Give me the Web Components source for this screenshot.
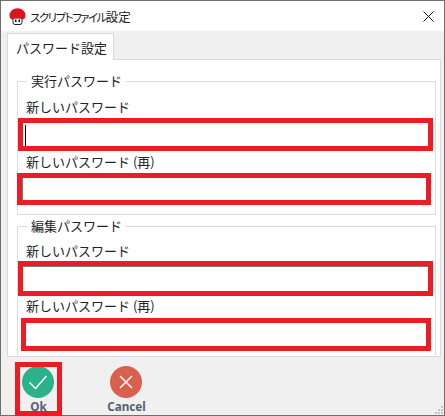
<!DOCTYPE html>
<html lang="ja">
<head>
<meta charset="utf-8">
<title>スクリプトファイル設定</title>
<style>
html, body { margin: 0; padding: 0; background: #f0f0f0; }
body { font-family: "Noto Sans CJK JP", "Noto Sans", sans-serif; font-size: 13px; color: #222; }
</style>
</head>
<body>
<dialog-window>
  <title-bar>スクリプトファイル<span slot="end">設定</span></title-bar>
  <tab-panel label="パスワード設定">
    <group-box label="実行パスワード" pad-top="3" pad-bottom="11">
      <pass-field label="新しいパスワード" mark="-5,-5,415,33" caret></pass-field>
      <pass-field label="新しいパスワード (再)" mark="-6,-5,414,32"></pass-field>
    </group-box>
    <group-box label="編集パスワード" pad-top="2" pad-bottom="8" open-bottom>
      <pass-field label="新しいパスワード" mark="-5,-6,415,35"></pass-field>
      <pass-field label="新しいパスワード (再)" mark="-2,-4,410,33"></pass-field>
    </group-box>
  </tab-panel>
  <button-bar>
    <round-button kind="ok" text="Ok" marked></round-button>
    <round-button kind="cancel" text="Cancel"></round-button>
  </button-bar>
</dialog-window>

<script>
class DialogWindow extends HTMLElement {
    constructor() {
        super();
        this.attachShadow({ mode: 'open' }).innerHTML = `
        <style>
        :host {
            display: flex;
            flex-direction: column;
            position: relative;
            box-sizing: border-box;
            width: 445px;
            height: 416px;
            border: 1px solid #6e6e6e;
            background: #f0f0f0;
        }
        svg { position: absolute; right: 1px; bottom: 1px; }
        </style>
        <slot></slot>
        <svg width="8" height="8" viewBox="0 0 8 8" fill="#c4c4c4">
          <rect x="6" y="0" width="2" height="2"/>
          <rect x="3" y="3" width="2" height="2"/>
          <rect x="6" y="3" width="2" height="2"/>
          <rect x="0" y="6" width="2" height="2"/>
          <rect x="3" y="6" width="2" height="2"/>
          <rect x="6" y="6" width="2" height="2"/>
        </svg>`;
    }
}

class TitleBar extends HTMLElement {
    constructor() {
        super();
        this.attachShadow({ mode: 'open' }).innerHTML = `
        <style>
        :host {
            display: flex;
            align-items: center;
            flex: none;
            height: 30px;
            background: #fff;
            padding-left: 8px;
            font-size: 12.500px;
            color: #1a1a1a;
        }
        .caption { margin-left: 4px; white-space: nowrap; }
        .kana { font-size: 11.500px; font-feature-settings: "palt"; letter-spacing: -1.500px; }
        .close { margin-left: auto; margin-right: 10px; }
        </style>
        <svg width="17" height="17" viewBox="0 0 17 17">
          <path d="M4 10h9v4.500a2 2 0 0 1-2 2H6a2 2 0 0 1-2-2z" fill="#fff" stroke="#222"/>
          <path d="M.5 7.500a8 7.300 0 0 1 16 0c0 2.500-1.500 4-3.500 4 0-1-1-1.500-4.500-1.500S4 10.500 4 11.500c-2 0-3.500-1.500-3.500-4z" fill="#d8141c"/>
          <rect x="6" y="11.500" width="1.500" height="2.500" fill="#111"/>
          <rect x="9.500" y="11.500" width="1.500" height="2.500" fill="#111"/>
        </svg>
        <span class="caption"><span class="kana"><slot></slot></span><slot name="end"></slot></span>
        <svg class="close" width="11" height="11" viewBox="0 0 11 11">
          <path d="M.5.500l10 10M10.500.500l-10 10" stroke="#111" stroke-width="1" fill="none"/>
        </svg>`;
    }
}

class TabPanel extends HTMLElement {
    constructor() {
        super();
        this.attachShadow({ mode: 'open' }).innerHTML = `
        <style>
        :host {
            display: block;
            flex: none;
            padding: 2px 3px 0 6px;
        }
        .tab {
            box-sizing: border-box;
            width: 107px;
            height: 27px;
            margin-bottom: -1px;
            position: relative;
            z-index: 1;
            padding-left: 8px;
            line-height: 27px;
            background: #fff;
            border: 1px solid #d9d9d9;
            border-bottom: none;
            font-size: 13px;
            white-space: nowrap;
        }
        .page {
            box-sizing: border-box;
            height: 298px;
            background: #fff;
            border: 1px solid #d9d9d9;
            padding: 12px 4px 0 9px;
            display: flex;
            flex-direction: column;
            gap: 2px;
        }
        </style>
        <div class="tab"></div>
        <div class="page"><slot></slot></div>`;
        this.shadowRoot.querySelector('.tab').textContent = this.getAttribute('label');
    }
}

class GroupBox extends HTMLElement {
    constructor() {
        super();
        this.attachShadow({ mode: 'open' }).innerHTML = `
        <style>
        :host { display: block; }
        fieldset {
            margin: 0;
            padding: 0 4px 0 4px;
            border: 1px solid #dcdcdc;
            min-width: 0;
        }
        legend {
            margin-left: 5px;
            padding: 0 4px;
            height: 18px;
            line-height: 18px;
            font-size: 13px;
            white-space: nowrap;
        }
        </style>
        <fieldset><legend></legend><slot></slot></fieldset>`;
        const box = this.shadowRoot.querySelector('fieldset');
        this.shadowRoot.querySelector('legend').textContent = this.getAttribute('label');
        box.style.paddingTop = this.getAttribute('pad-top') + 'px';
        box.style.paddingBottom = this.getAttribute('pad-bottom') + 'px';
        if (this.hasAttribute('open-bottom')) box.style.borderBottomColor = 'transparent';
    }
}

class PassField extends HTMLElement {
    constructor() {
        super();
        this.attachShadow({ mode: 'open' }).innerHTML = `
        <style>
        :host { display: block; }
        .label {
            height: 29px;
            line-height: 28px;
            padding-left: 4px;
            font-size: 13px;
            white-space: nowrap;
        }
        .input {
            position: relative;
            box-sizing: border-box;
            height: 26px;
            background: #fff;
            border: 1px solid #7a7a7a;
        }
        .mark {
            position: absolute;
            box-sizing: border-box;
            border: 5px solid #ed1c24;
        }
        .caret {
            position: absolute;
            left: 2px;
            top: 2px;
            width: 1px;
            height: 21px;
            background: #000;
        }
        </style>
        <div class="label"></div>
        <div class="input"><div class="mark"></div></div>`;
        this.shadowRoot.querySelector('.label').textContent = this.getAttribute('label');
        const [left, top, width, height] = this.getAttribute('mark').split(',');
        const mark = this.shadowRoot.querySelector('.mark');
        mark.style.cssText = `left:${left}px;top:${top}px;width:${width}px;height:${height}px`;
        if (this.hasAttribute('caret')) {
            const caret = document.createElement('div');
            caret.className = 'caret';
            this.shadowRoot.querySelector('.input').appendChild(caret);
        }
    }
}

class ButtonBar extends HTMLElement {
    constructor() {
        super();
        this.attachShadow({ mode: 'open' }).innerHTML = `
        <style>
        :host {
            display: flex;
            gap: 44px;
            padding: 9px 0 0 15px;
        }
        </style>
        <slot></slot>`;
    }
}

class RoundButton extends HTMLElement {
    constructor() {
        super();
        const ok = this.getAttribute('kind') === 'ok';
        this.attachShadow({ mode: 'open' }).innerHTML = `
        <style>
        :host {
            display: flex;
            flex-direction: column;
            align-items: center;
            position: relative;
            width: 44px;
            font-family: "Noto Sans", sans-serif;
            font-size: 11.700px;
            font-weight: 700;
            color: #566170;
        }
        svg { display: block; }
        .text { height: 17px; line-height: 17px; margin-left: 1px; }
        .mark {
            position: absolute;
            left: -1px;
            top: -4px;
            box-sizing: border-box;
            width: 47px;
            height: 54px;
            border: 5px solid #ed1c24;
        }
        </style>
        <svg width="32" height="32" viewBox="0 0 32 32">
          <circle cx="16" cy="16" r="16" fill="${ok ? '#2bb28a' : '#d9604c'}"/>
          ${ok
            ? '<path d="M7.500 16.500l6 6L24.500 10" fill="none" stroke="#fff" stroke-width="1.500"/>'
            : '<path d="M10 10l12 12M22 10L10 22" fill="none" stroke="#fff" stroke-width="1.500"/>'}
        </svg>
        <span class="text"></span>
        ${this.hasAttribute('marked') ? '<div class="mark"></div>' : ''}`;
        this.shadowRoot.querySelector('.text').textContent = this.getAttribute('text');
    }
}

customElements.define('dialog-window', DialogWindow);
customElements.define('title-bar', TitleBar);
customElements.define('tab-panel', TabPanel);
customElements.define('group-box', GroupBox);
customElements.define('pass-field', PassField);
customElements.define('button-bar', ButtonBar);
customElements.define('round-button', RoundButton);
</script>
</body>
</html>
